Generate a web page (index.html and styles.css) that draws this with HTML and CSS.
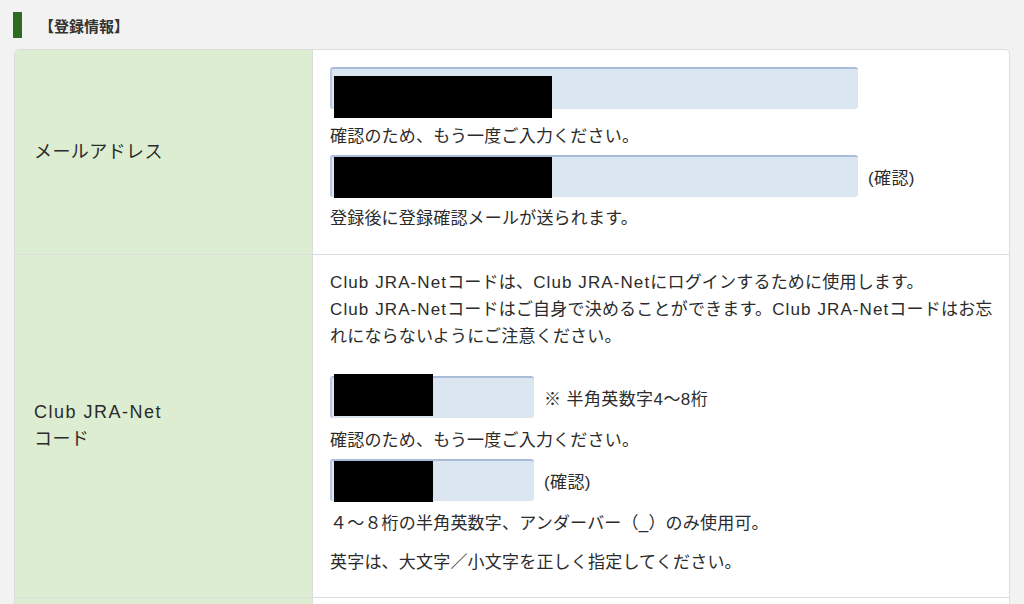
FILE: index.html
```html
<!DOCTYPE html>
<html lang="ja">
<head>
    <meta charset="UTF-8">
    <meta name="viewport" content="width=device-width, initial-scale=1.0">
    <title>登録情報</title>
    <link rel="stylesheet" href="styles.css">
</head>
<body>
    <div class="page">
        <h2 class="section-title">【登録情報】</h2>

        <table class="form-table">
            <tr class="row-mail">
                <th>メールアドレス</th>
                <td>
                    <div class="field">
                        <span class="input wide"><span class="mask mask-wide mask-low"></span></span>
                    </div>
                    <p class="note">確認のため、もう一度ご入力ください。</p>
                    <div class="field">
                        <span class="input wide"><span class="mask mask-wide"></span></span>
                        <span class="hint">(確認)</span>
                    </div>
                    <p class="note last">登録後に登録確認メールが送られます。</p>
                </td>
            </tr>
            <tr class="row-code">
                <th><span class="latin">Club JRA-Net</span><br>コード</th>
                <td>
                    <p class="desc"><span class="latin">Club JRA-Net</span>コードは、<span class="latin">Club JRA-Net</span>にログインするために使用します。<br><span class="latin">Club JRA-Net</span>コードはご自身で決めることができます。<span class="latin">Club JRA-Net</span>コードはお忘れにならないようにご注意ください。</p>
                    <div class="field">
                        <span class="input short"><span class="mask mask-short mask-high"></span></span>
                        <span class="hint">※ 半角英数字4〜8桁</span>
                    </div>
                    <p class="note">確認のため、もう一度ご入力ください。</p>
                    <div class="field">
                        <span class="input short"><span class="mask mask-short"></span></span>
                        <span class="hint">(確認)</span>
                    </div>
                    <p class="note rule">４～８桁の半角英数字、アンダーバー（_）のみ使用可。</p>
                    <p class="note rule last">英字は、大文字／小文字を正しく指定してください。</p>
                </td>
            </tr>
            <tr class="row-next">
                <th></th>
                <td></td>
            </tr>
        </table>
    </div>
</body>
</html>
```

FILE: styles.css
```css
/* Page */
body {
    margin: 0;
    background-color: #f2f2f2;
    color: #2b2b2b;
    font-family: "Liberation Sans", "Noto Sans CJK JP", sans-serif;
    overflow: hidden;
}

.page {
    padding: 12px 14px 0 14px;
}

/* Section heading with green marker */
.section-title {
    display: flex;
    align-items: center;
    margin: 0 0 11px -1px;
    height: 26px;
    font-size: 15px;
    font-weight: bold;
    color: #333;
}

.section-title::before {
    content: "";
    width: 9px;
    height: 26px;
    margin-right: 17px;
    background-color: #2e6b22;
}

/* Form table */
.form-table {
    width: 996px;
    border-collapse: separate;
    border-spacing: 0;
    border: 1px solid #dcdcdc;
    border-radius: 5px;
    background-color: #fff;
    overflow: hidden;
}

.form-table th {
    width: 278px;
    padding: 0 0 0 19px;
    background-color: #dcedd2;
    border-right: 1px solid #dcdcdc;
    border-bottom: 1px solid #dcdcdc;
    text-align: left;
    vertical-align: middle;
    font-weight: normal;
    font-size: 18px;
    letter-spacing: 0.4px;
    line-height: 27px;
}

.form-table td {
    padding: 17px 14px 0 17px;
    border-bottom: 1px solid #dcdcdc;
    vertical-align: top;
    font-size: 17px;
    letter-spacing: 0.2px;
}

.row-mail td {
    height: 187px;
}

.row-code td {
    padding-top: 14px;
    height: 328px;
}

.row-next th,
.row-next td {
    height: 20px;
    padding: 0;
}

/* Latin words are set wider, like the original font */
.latin {
    letter-spacing: 1.1px;
}

th .latin {
    letter-spacing: 1.5px;
}

/* Inputs */
.field {
    display: flex;
    align-items: center;
    gap: 10px;
}

.input {
    position: relative;
    display: block;
    height: 40px;
    background-color: #dce6f1;
    border-top: 2px solid #a9bcd8;
    border-left: 2px solid #b8c8e0;
    border-radius: 3px;
    box-sizing: content-box;
}

.input.wide {
    width: 526px;
}

.input.short {
    width: 202px;
}

/* Redacted values */
.mask {
    position: absolute;
    left: 2px;
    top: 0;
    height: 41px;
    background-color: #000;
}

.mask-wide {
    width: 218px;
}

.mask-short {
    width: 99px;
}

.mask-low {
    top: 7px;
    height: 42px;
}

.mask-high {
    top: -4px;
    height: 42px;
}

.hint {
    font-size: 17px;
    letter-spacing: 0.4px;
}

/* Texts */
.note {
    margin: 14px 0 4px;
    line-height: 28px;
}

.note.last {
    margin-bottom: 0;
}

.row-mail .note.last {
    margin-top: 8px;
}

.desc {
    margin: 0 0 26px;
    line-height: 27px;
}

.row-code .note {
    margin: 9px 0 4px;
}

.row-code .rule {
    margin: 9px 0 0;
}

.row-code .rule.last {
    margin-top: 11px;
}
```
